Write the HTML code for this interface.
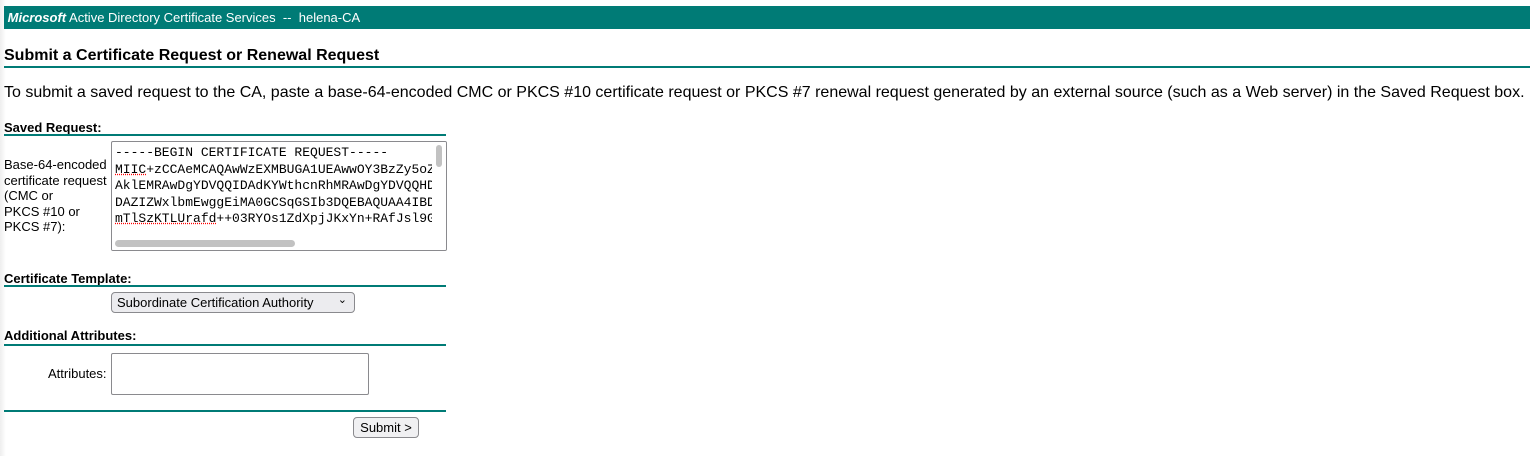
<!DOCTYPE html>
<html><head><style>
body{margin:0;width:1530px;height:456px;background:#fff;font-family:"Liberation Sans",Arial,sans-serif;position:relative;overflow:hidden}
body:before{content:"";position:absolute;left:0;top:0;width:6px;height:456px;background:linear-gradient(90deg,#eee,#fff)}
.a{position:absolute;white-space:nowrap}
.bar{left:4px;top:6px;width:1526px;height:23px;background:#007b76;color:#fff;font-size:13px;line-height:23px}
.line{position:absolute;height:2px;background:#007b76;left:4px}
.lbl{font-size:13px;font-weight:bold;color:#000}
.ta{position:absolute;border:1px solid #8a8a8e;border-radius:2px;background:#fff;box-sizing:border-box;overflow:hidden}
.mono{font-family:"Liberation Mono","DejaVu Sans Mono",monospace;font-size:13px;line-height:16.5px;padding:3px 0 0 3px;white-space:pre}
.sq{text-decoration:underline dotted red}
</style></head><body>
<div class="a bar">&nbsp;<b><i>Microsoft</i></b> Active Directory Certificate Services &nbsp;-- &nbsp;helena-CA</div>
<div class="a" style="left:4px;top:47px;font-size:16px;font-weight:bold">Submit a Certificate Request or Renewal Request</div>
<div class="line" style="top:66px;width:1526px"></div>
<div class="a" style="left:4px;top:84px;font-size:16px">To submit a saved request to the CA, paste a base-64-encoded CMC or PKCS #10 certificate request or PKCS #7 renewal request generated by an external source (such as a Web server) in the Saved Request box.</div>
<div class="a lbl" style="left:4px;top:120px">Saved Request:</div>
<div class="line" style="top:134px;width:442px"></div>
<div class="a" style="left:4px;top:157px;font-size:13px;line-height:15.5px">Base-64-encoded<br>certificate request<br>(CMC or<br>PKCS #10 or<br>PKCS #7):</div>
<div class="ta" style="left:111px;top:141px;width:336px;height:110px">
<div class="mono">-----BEGIN CERTIFICATE REQUEST-----
<span class="sq">MIIC</span>+zCCAeMCAQAwWzEXMBUGA1UEAwwOY3BzZy5oZ
AklEMRAwDgYDVQQIDAdKYWthcnRhMRAwDgYDVQQHD
DAZIZWxlbmEwggEiMA0GCSqGSIb3DQEBAQUAA4IBD
<span class="sq">mTlSzKTLUrafd</span>++03RYOs1ZdXpjJKxYn+RAfJsl9G</div>
<div style="position:absolute;left:0;bottom:0;width:334px;height:14px;background:#fff"></div>
<div style="position:absolute;left:3px;bottom:3px;width:180px;height:7px;border-radius:4px;background:#c2c2c2"></div>
<div style="position:absolute;right:0;top:0;width:14px;height:95px;background:#fff"></div>
<div style="position:absolute;right:4px;top:3px;width:6px;height:22px;border-radius:3px;background:#c2c2c2"></div>
</div>
<div class="a lbl" style="left:4px;top:271px">Certificate Template:</div>
<div class="line" style="top:285px;width:442px"></div>
<div class="a" style="left:111px;top:292px;width:244px;height:21px;border:1px solid #8a8a8e;border-radius:4px;background:#ececef;box-sizing:border-box;font-size:13px;line-height:19px;padding-left:5px">Subordinate Certification Authority<span style="position:absolute;right:7px;top:-2px;font-size:11px">&#8964;</span></div>
<div class="a lbl" style="left:4px;top:328px">Additional Attributes:</div>
<div class="line" style="top:344px;width:442px"></div>
<div class="a" style="left:48px;top:366px;font-size:13px">Attributes:</div>
<div class="ta" style="left:111px;top:353px;width:258px;height:42px"></div>
<div class="line" style="top:410px;width:442px"></div>
<div class="a" style="left:353px;top:417px;width:66px;height:21px;border:1px solid #8a8a8e;border-radius:4px;background:#f0f0f2;box-sizing:border-box;font-size:13px;line-height:19px;text-align:center">Submit &gt;</div>
</body></html>
